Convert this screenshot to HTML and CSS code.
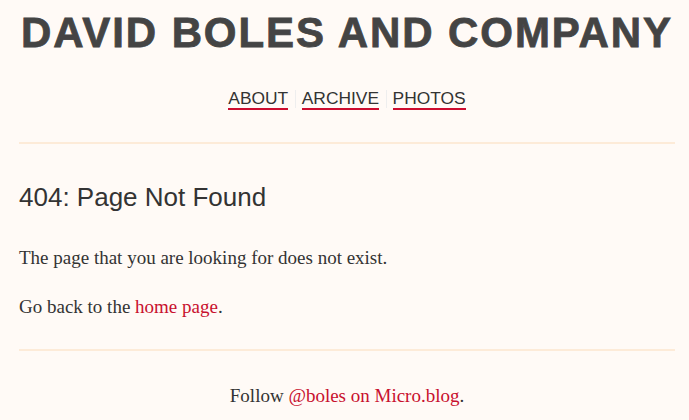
FILE: index.html
```html
<!DOCTYPE html>
<html>
<head>
<meta charset="utf-8">
<link rel="stylesheet" href="styles.css">
</head>
<body>
<div class="wrap">
  <header class="site-header">
    <h1 class="site-title">DAVID BOLES AND COMPANY</h1>
    <nav class="nav">
      <a class="nav-link" href="#">ABOUT</a><span class="sep"></span><a class="nav-link" href="#">ARCHIVE</a><span class="sep"></span><a class="nav-link" href="#">PHOTOS</a>
    </nav>
  </header>
  <main class="content">
    <h2 class="page-title">404: Page Not Found</h2>
    <p class="text">The page that you are looking for does not exist.</p>
    <p class="text">Go back to the <a class="link" href="#">home page</a>.</p>
  </main>
  <footer class="footer">
    <p class="text">Follow <a class="link" href="#">@boles on Micro.blog</a>.</p>
  </footer>
</div>
</body>
</html>
```
FILE: styles.css
```css
html, body {
  margin: 0;
  padding: 0;
  background: #fffaf6;
}
body {
  font-family: "Liberation Serif", Georgia, serif;
  color: #333;
}
.wrap {
  padding: 0 14px 0 19px;
}
.site-header {
  padding-top: 10px;
  padding-bottom: 32px;
  border-bottom: 2px solid #fdebd8;
  text-align: center;
}
.site-title {
  margin: 0;
  font-family: "Liberation Sans", Arial, sans-serif;
  font-weight: 700;
  font-size: 42px;
  line-height: 46px;
  color: #444;
  letter-spacing: 1.9px;
  -webkit-text-stroke: 0.8px #444;
}
.nav {
  margin-top: 32px;
  display: flex;
  justify-content: center;
  align-items: center;
  font-family: "Liberation Sans", Arial, sans-serif;
  font-size: 17.4px;
}
.nav-link {
  color: #333;
  text-decoration: none;
  border-bottom: 2px solid #cc0c2f;
  line-height: 20px;
}
.sep {
  width: 1px;
  height: 18px;
  background: #eee;
  margin: 0 6px 0 6.5px;
}
.content {
  padding-top: 37px;
  padding-bottom: 8px;
  border-bottom: 2px solid #fdebd8;
}
.page-title {
  margin: 0 0 30px;
  font-family: "Liberation Sans", Arial, sans-serif;
  font-weight: 400;
  font-size: 26px;
  line-height: 32px;
  color: #333;
}
.text {
  margin: 0 0 20px;
  font-size: 19px;
  line-height: 29px;
}
.link {
  color: #c8102e;
  text-decoration: none;
}
.footer {
  padding-top: 30px;
  text-align: center;
}
```
